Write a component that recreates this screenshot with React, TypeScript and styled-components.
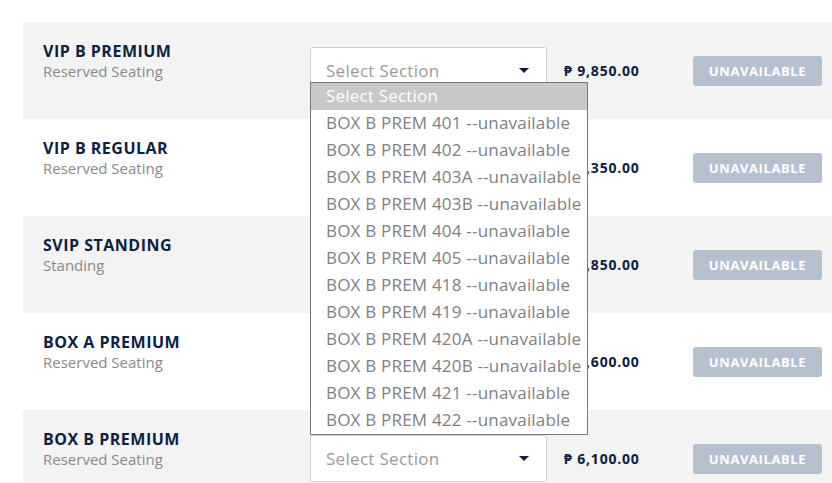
import React from "react";
import styled, { createGlobalStyle } from "styled-components";

const Global = createGlobalStyle`
  html, body { margin: 0; padding: 0; background: #fff; overflow: hidden; }
  body { font-family: "Open Sans", "Noto Sans", sans-serif; }
  * { box-sizing: border-box; }
`;

const Page = styled.div`
  padding: 22px 0 0 23px;
  width: 832px;
`;

const List = styled.div`
  display: flex;
  flex-direction: column;
`;

const Row = styled.div<{ $shaded: boolean }>`
  height: 97px;
  display: flex;
  align-items: center;
  padding-left: 20px;
  background: ${(p) => (p.$shaded ? "#f3f3f3" : "#ffffff")};
`;

const Info = styled.div`
  width: 267px;
  align-self: flex-start;
  margin-top: 19px;
  display: flex;
  flex-direction: column;
`;

const Title = styled.div`
  font-size: 16px;
  font-weight: 700;
  color: #0c2141;
  line-height: 20px;
  letter-spacing: 0.5px;
`;

const Sub = styled.div`
  font-size: 15px;
  color: #8a8a8a;
  line-height: 20px;
`;

const SelectWrap = styled.div`
  position: relative;
  width: 237px;
  height: 47px;
`;

const SelectBox = styled.div`
  height: 100%;
  border: 1px solid #cfcfcf;
  border-radius: 3px;
  background: #fff;
  display: flex;
  align-items: center;
  justify-content: space-between;
  padding: 0 17px 0 15px;
  font-size: 17px;
  letter-spacing: 0.3px;
  color: #9a9a9a;
`;

const Caret = styled.span`
  width: 0;
  height: 0;
  border-left: 5px solid transparent;
  border-right: 5px solid transparent;
  border-top: 5px solid #0c2141;
`;

const Menu = styled.div`
  position: absolute;
  top: 35px;
  left: 0;
  width: 278px;
  border: 1px solid #7a7a7a;
  background: #fff;
  z-index: 5;
`;

const Option = styled.div<{ $active?: boolean }>`
  height: 27px;
  line-height: 25px;
  padding-left: 15px;
  font-size: 17px;
  letter-spacing: 0.2px;
  white-space: nowrap;
  color: ${(p) => (p.$active ? "#fff" : "#7f7f7f")};
  background: ${(p) => (p.$active ? "#c8c8c8" : "#fff")};
`;

const Price = styled.div`
  width: 146px;
  padding-left: 17px;
  font-size: 14px;
  font-weight: 700;
  letter-spacing: 0.8px;
  color: #0c2141;
  white-space: nowrap;
`;

const Button = styled.button`
  width: 129px;
  height: 30px;
  border: none;
  border-radius: 3px;
  background: #b6c1cf;
  color: #fff;
  font-family: inherit;
  font-size: 13px;
  font-weight: 700;
  letter-spacing: 0.6px;
  padding: 0;
`;

const rows = [
  { title: "VIP B PREMIUM", sub: "Reserved Seating", price: "9,850.00" },
  { title: "VIP B REGULAR", sub: "Reserved Seating", price: "9,350.00" },
  { title: "SVIP STANDING", sub: "Standing", price: "7,850.00" },
  { title: "BOX A PREMIUM", sub: "Reserved Seating", price: "6,600.00" },
  { title: "BOX B PREMIUM", sub: "Reserved Seating", price: "6,100.00" },
];

const options = [
  "401", "402", "403A", "403B", "404", "405", "418", "419", "420A", "420B", "421", "422",
];

export default function App() {
  return (
    <Page>
      <Global />
      <List>
        {rows.map((r, i) => (
          <Row key={r.title} $shaded={i % 2 === 0}>
            <Info>
              <Title>{r.title}</Title>
              <Sub>{r.sub}</Sub>
            </Info>
            <SelectWrap>
              <SelectBox>
                <span>Select Section</span>
                <Caret />
              </SelectBox>
              {i === 0 && (
                <Menu>
                  <Option $active>Select Section</Option>
                  {options.map((o) => (
                    <Option key={o}>BOX B PREM {o} --unavailable</Option>
                  ))}
                </Menu>
              )}
            </SelectWrap>
            <Price>₱ {r.price}</Price>
            <Button>UNAVAILABLE</Button>
          </Row>
        ))}
      </List>
    </Page>
  );
}
